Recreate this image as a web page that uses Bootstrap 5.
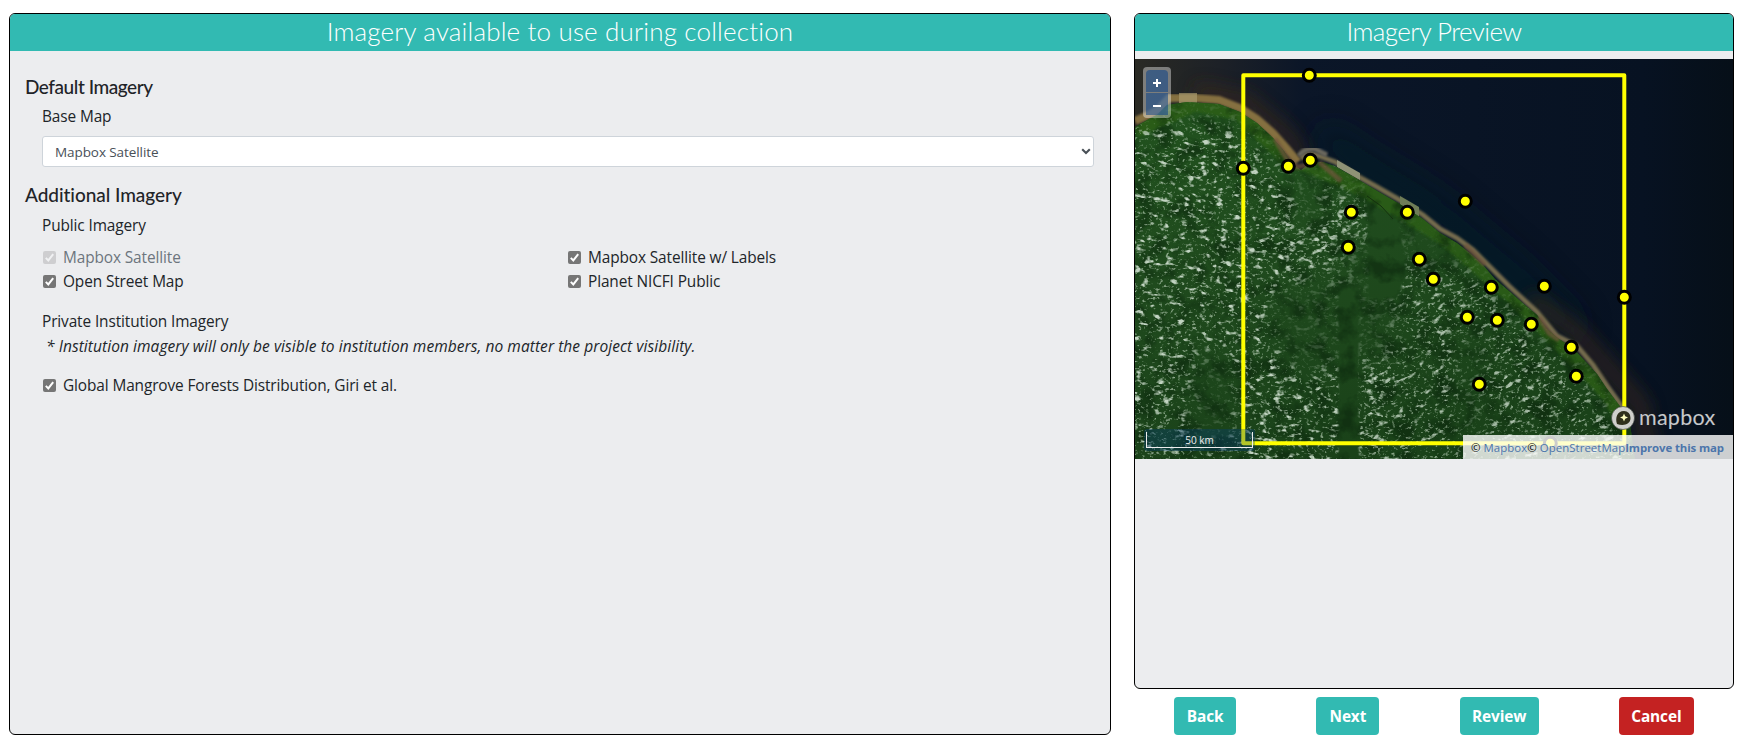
<!DOCTYPE html>
<html lang="en">
<head>
<meta charset="utf-8">
<meta name="viewport" content="width=device-width, initial-scale=1">
<title>Imagery Selection</title>
<link href="https://cdn.jsdelivr.net/npm/bootstrap@5.3.0/dist/css/bootstrap.min.css" rel="stylesheet">
<script src="https://cdn.jsdelivr.net/npm/bootstrap@5.3.0/dist/js/bootstrap.bundle.min.js"></script>
<style>
  body { font-family: "Open Sans", sans-serif; font-size: 15.4px; line-height: 24px; letter-spacing: -.11px; color: #212529; }
  .wizard { height: 745px; padding: 13px 8px 10px 9px; gap: 23px; }
  .panel { background: #ecedef; border: 1px solid #000; border-radius: 6px; overflow: hidden; }
  .panel-main { width: 1102px; }
  .panel-side { width: 600px; }
  .panel-title { background: #32bab2; color: #fff; height: 37px; font: 300 26px/35px Lato, sans-serif; letter-spacing: .16px; }
  .panel-side .panel-title { letter-spacing: -.6px; }
  .section-title { font: 500 19px/24px Lato, sans-serif; margin: 0 0 0 -1px; color: #1f2428; }
  .section-title.tight { letter-spacing: -.45px; }
  .section-title.even { letter-spacing: -.05px; }
  .basemap { height: 31px; font-size: 13.5px; line-height: 19px; letter-spacing: -.08px; color: #495057; border-radius: 3px; padding: 6px 12px 4px 12px;
    background: #fff url("data:image/svg+xml,%3Csvg xmlns='http://www.w3.org/2000/svg' width='10' height='7'%3E%3Cpath d='M1.2 1.2 5 5 8.800 1.200' fill='none' stroke='%23495057' stroke-width='2.1'/%3E%3C/svg%3E") no-repeat right 2px center; background-size: 10px 7px; border-color: #ced4da; }
  .tick { appearance: none; width: 13px; height: 13px; margin: 0 7px 0 1px; border-radius: 2px; flex: none; position: relative; top: -1px;
    background: #767676 url("data:image/svg+xml,%3Csvg xmlns='http://www.w3.org/2000/svg' width='13' height='13'%3E%3Cpath d='M2.800 6.900 5.300 9.400 10.200 3.200' fill='none' stroke='%23fff' stroke-width='2'/%3E%3C/svg%3E"); }
  .tick:disabled { opacity: .25; }
  .choices { margin-right: 2px; }
  .note { font-style: italic; font-size: 15.5px; letter-spacing: .065px; padding-left: 4px; }
  .map { height: 400px; margin-top: 8px; background: #071322; }
  .map svg.tiles { display: block; }
  .zoom-ctl { top: 8px; left: 8px; width: 28px; padding: 3px; border-radius: 4px; background: rgba(255,255,255,.4); }
  .zoom-ctl button { display: block; width: 22px; height: 22px; border: 0; padding: 3px 0 0; background: rgba(0,60,136,.5); }
  .zoom-ctl button + button { margin-top: 1px; }
  .zoom-ctl svg { display: block; margin: auto; }
  .scale-bar { left: 9px; bottom: 8px; width: 111px; height: 22px; padding: 3px 2px 2px; background: rgba(0,60,136,.3); border-radius: 3px; }
  .scale-bar div { height: 16px; border: 1px solid #eee; border-top: 0; color: #eee; font-size: 10px; line-height: 16px; letter-spacing: -.05px; }
  .credits { right: 0; bottom: 0; width: 270px; height: 24px; padding-left: 8px; background: rgba(255,255,255,.8); font-size: 11.4px; line-height: 26px; white-space: nowrap; color: #000; letter-spacing: .06px; }
  .credits a { color: #4c75ab; text-decoration: none; }
  .credits b { letter-spacing: -.1px; }
  .btn-wiz { height: 38px; color: #fff; font-weight: 700; font-size: 15.4px; letter-spacing: -.1px; line-height: 24px; border: 0; border-radius: 4px; padding: 8px 0 6px; background: #32bab2; }
  .btn-quit { background: #c42222; }
</style>
</head>
<body>
<main class="wizard d-flex">
  <section class="panel panel-main">
    <h1 class="panel-title text-center m-0">Imagery available to use during collection</h1>
    <div class="px-3">
      <h2 class="section-title tight" style="margin-top:24px">Default Imagery</h2>
      <div style="padding:6px 0 0 16px">
        <label for="base">Base Map</label>
        <select id="base" class="form-select basemap" style="margin-top:7px"><option>Mapbox Satellite</option></select>
      </div>
      <h2 class="section-title even" style="margin-top:16px">Additional Imagery</h2>
      <div style="padding:7px 0 0 16px">
        <div>Public Imagery</div>
        <div class="row g-0 choices" style="margin-top:8px">
          <label class="col-6 d-flex align-items-center text-secondary"><input class="tick" type="checkbox" checked disabled>Mapbox Satellite</label>
          <label class="col-6 d-flex align-items-center"><input class="tick" type="checkbox" checked>Mapbox Satellite w/ Labels</label>
          <label class="col-6 d-flex align-items-center"><input class="tick" type="checkbox" checked>Open Street Map</label>
          <label class="col-6 d-flex align-items-center"><input class="tick" type="checkbox" checked>Planet NICFI Public</label>
        </div>
        <div class="mt-3">Private Institution Imagery</div>
        <div class="note">* Institution imagery will only be visible to institution members, no matter the project visibility.</div>
        <label class="d-flex align-items-center mt-3"><input class="tick" type="checkbox" checked>Global Mangrove Forests Distribution, Giri et al.</label>
      </div>
    </div>
  </section>

  <div class="panel-side d-flex flex-column">
    <section class="panel flex-grow-1">
      <h1 class="panel-title text-center m-0">Imagery Preview</h1>
      <div class="map position-relative">
        <svg class="tiles" width="598" height="400" viewBox="0 0 598 400">
          <defs>
            <linearGradient id="sea" x1="0" y1="0" x2="1" y2="0">
              <stop offset="0" stop-color="#2a2a24"/><stop offset=".14" stop-color="#1d2127"/><stop offset=".28" stop-color="#0b1628"/><stop offset=".85" stop-color="#071222"/><stop offset="1" stop-color="#060f18"/>
            </linearGradient>
            <linearGradient id="ground" x1="0" y1="0" x2=".3" y2="1">
              <stop offset="0" stop-color="#21521e"/><stop offset=".5" stop-color="#1f4a1d"/><stop offset="1" stop-color="#1a4219"/>
            </linearGradient>
            <path id="land" d="M0 68 14 60 22 56 32 46 52 43 84 45 105 53 122 64 138 79 149 92 156 104 166 111 175 104 188 103 200 107 224 121 244 133 268 147 288 160 305 174 322 184 336 195 348 206 360 220 374 232 390 246 402 256 412 270 424 280 438 289 450 302 462 315 472 330 484 346 494 358 500 400H0Z"/>
            <clipPath id="landClip"><use href="#land"/></clipPath>
            <filter id="soft" x="-20%" y="-20%" width="140%" height="140%"><feGaussianBlur stdDeviation="9"/></filter>
            <filter id="veil" x="-20%" y="-20%" width="140%" height="140%"><feGaussianBlur stdDeviation="16"/></filter>
            <filter id="haze" x="-5%" y="-5%" width="110%" height="110%"><feGaussianBlur stdDeviation="1"/></filter>
            <filter id="cloudsA" x="0" y="0" width="100%" height="100%" color-interpolation-filters="sRGB">
              <feTurbulence type="fractalNoise" baseFrequency=".1 .19" numOctaves="4" seed="8"/>
              <feColorMatrix values="0 0 0 0 .76  0 0 0 0 .83  0 0 0 0 .76  6.500 0 0 0 -3.950"/>
            </filter>
            <filter id="cloudsB" x="0" y="0" width="100%" height="100%" color-interpolation-filters="sRGB">
              <feTurbulence type="fractalNoise" baseFrequency=".28 .34" numOctaves="2" seed="21"/>
              <feColorMatrix values="0 0 0 0 .66  0 0 0 0 .76  0 0 0 0 .65  0 5 0 0 -2.950"/>
            </filter>
            <filter id="mottle" x="0" y="0" width="100%" height="100%" color-interpolation-filters="sRGB">
              <feTurbulence type="fractalNoise" baseFrequency=".05" numOctaves="4" seed="4"/>
              <feColorMatrix values="0 0 0 0 .03  0 0 0 0 .13  0 0 0 0 .04  0 0 3.500 0 -1.600"/>
            </filter>
            <mask id="cover" maskUnits="userSpaceOnUse" x="-60" y="-60" width="720" height="520">
              <rect x="-60" y="-60" width="720" height="520" fill="#fff"/>
              <path d="M0 58 60 46 100 52 138 80 166 112 200 112 288 165 350 210 410 270 455 308 505 375" fill="none" stroke="#000" stroke-width="26" filter="url(#soft)"/>
              <path d="M231 110H265V170L272 215 262 240H233Z M203 225H224V400H203Z" fill="#000" filter="url(#haze)"/>
              <path d="M132 235 195 210 205 235V310L165 318 140 290Z M155 118H190V170H160Z M325 265H346V385H325Z M60 285 100 300V390H50Z M262 130 325 190 310 220 262 200Z M204 180H262V300H215Z" fill="#000" opacity=".8" filter="url(#soft)"/>
            </mask>
          </defs>
          <rect width="598" height="400" fill="url(#sea)"/>
          <path d="M185 75 240 112 300 148 380 215 440 275" fill="none" stroke="#051f26" stroke-width="26" opacity=".8" filter="url(#veil)"/>
          <path d="M60 32 110 42 150 74 168 100M395 240 440 272 505 345 515 400" fill="none" stroke="#3a291e" stroke-width="14" opacity=".8" filter="url(#soft)"/>
          <path d="M0 62 14 56 24 50 34 39 60 39 84 41 105 49 122 60 138 74 152 90 163 103" fill="none" stroke="#85703f" stroke-width="8" filter="url(#haze)"/>
          <path d="M44 34H62V44H44Z" fill="#a89a6c" opacity=".7"/>
          <path d="M166 100Q172 92 184 97L200 103 224 118 242 128 268 143 288 156 305 170 322 179 338 191 352 205 374 227 402 253 422 277 442 287 458 306 472 327 490 352" fill="none" stroke="#756c4d" stroke-width="5" filter="url(#haze)"/>
          <path d="M164 97Q168 89 180 90L192 96" fill="none" stroke="#6b675d" stroke-width="5" filter="url(#haze)"/>
          <path d="M202 101 225 114V121L202 108Z" fill="#8f9276"/>
          <path d="M265 137 284 148V159L265 146Z" fill="#6f7d57"/>
          <use href="#land" fill="url(#ground)"/>
          <g clip-path="url(#landClip)">
            <path d="M0 70 60 44 105 53 150 96 175 106 230 130 310 178 375 234 430 288 475 336 500 380" fill="none" stroke="#2d6119" stroke-width="17" opacity=".75" filter="url(#haze)"/>
            <rect width="598" height="400" filter="url(#mottle)" opacity=".5"/>
            <g mask="url(#cover)">
              <g transform="rotate(9 80 200)"><rect x="-60" y="-60" width="330" height="520" filter="url(#cloudsA)"/></g>
              <g transform="rotate(-24 400 300)"><rect x="210" y="60" width="400" height="420" filter="url(#cloudsA)" opacity=".85"/></g>
              <rect width="598" height="400" filter="url(#cloudsB)" opacity=".75"/>
            </g>
          </g>
          <path d="M140 80 152 100 162 108 172 106M184 103 206 122M330 186 350 206M404 258 414 274 424 281" fill="none" stroke="#71553c" stroke-width="5" opacity=".7" filter="url(#haze)"/>
          <path d="M232 137 246 147 258 160" fill="none" stroke="#14320f"/>
          <path d="M108.300 16.300H489.300V384.300H108.300Z" fill="none" stroke="#ff0" stroke-width="4" stroke-linejoin="round"/>
          <g fill="#ff0" stroke="#000" stroke-width="3">
            <circle cx="174.300" cy="16.300" r="6"/><circle cx="108.300" cy="109.300" r="6"/><circle cx="153.300" cy="107.300" r="6"/><circle cx="175.300" cy="101.300" r="6"/>
            <circle cx="216.300" cy="153.300" r="6"/><circle cx="272.300" cy="153.300" r="6"/><circle cx="213.300" cy="188.300" r="6"/><circle cx="330.300" cy="142.300" r="6"/>
            <circle cx="284.300" cy="200.300" r="6"/><circle cx="298.300" cy="220.300" r="6"/><circle cx="356.300" cy="228.300" r="6"/><circle cx="409.300" cy="227.300" r="6"/>
            <circle cx="489.300" cy="238.300" r="6"/><circle cx="332.300" cy="258.300" r="6"/><circle cx="362.300" cy="261.300" r="6"/><circle cx="396.300" cy="265.300" r="6"/>
            <circle cx="436.300" cy="288.300" r="6"/><circle cx="441.300" cy="317.300" r="6"/><circle cx="344.300" cy="325.300" r="6"/><circle cx="415.300" cy="384.300" r="6"/>
          </g>
          <g>
            <circle cx="488" cy="359" r="11.500" fill="#d0d0cc" stroke="#383c38" stroke-opacity=".6"/>
            <path d="M482 365C480 359 482 352 489 352A6.500 6.500 0 0 1 495.500 359C495.500 366 488 367 482 365Z" fill="#30301c"/>
            <path d="m489 354.500 1.200 2.800 2.800 1.200-2.800 1.200-1.200 2.800-1.200-2.800-2.800-1.200 2.800-1.200Z" fill="#ffffc0"/>
            <text x="504" y="365.500" font-family="Lato, sans-serif" font-size="21.500" textLength="76" fill="#c6c8cb" stroke="#20252c" stroke-width=".7" paint-order="stroke">mapbox</text>
          </g>
        </svg>
        <div class="zoom-ctl position-absolute">
          <button class="rounded-top-1" aria-label="Zoom in"><svg width="8" height="8"><path d="M4 0V8M0 4H8" stroke="#fff" stroke-width="2"/></svg></button>
          <button aria-label="Zoom out"><svg width="8" height="8"><path d="M0 4H8" stroke="#fff" stroke-width="2"/></svg></button>
        </div>
        <div class="scale-bar position-absolute"><div class="text-center">50 km</div></div>
        <div class="credits position-absolute">© <a href="#">Mapbox</a>© <a href="#">OpenStreetMap</a><a href="#"><b>Improve this map</b></a></div>
      </div>
    </section>
    <div class="d-flex justify-content-around" style="padding-top:8px">
      <button class="btn btn-wiz" style="width:62px">Back</button>
      <button class="btn btn-wiz" style="width:63px">Next</button>
      <button class="btn btn-wiz" style="width:79px">Review</button>
      <button class="btn btn-wiz btn-quit" style="width:75px">Cancel</button>
    </div>
  </div>
</main>
</body>
</html>
